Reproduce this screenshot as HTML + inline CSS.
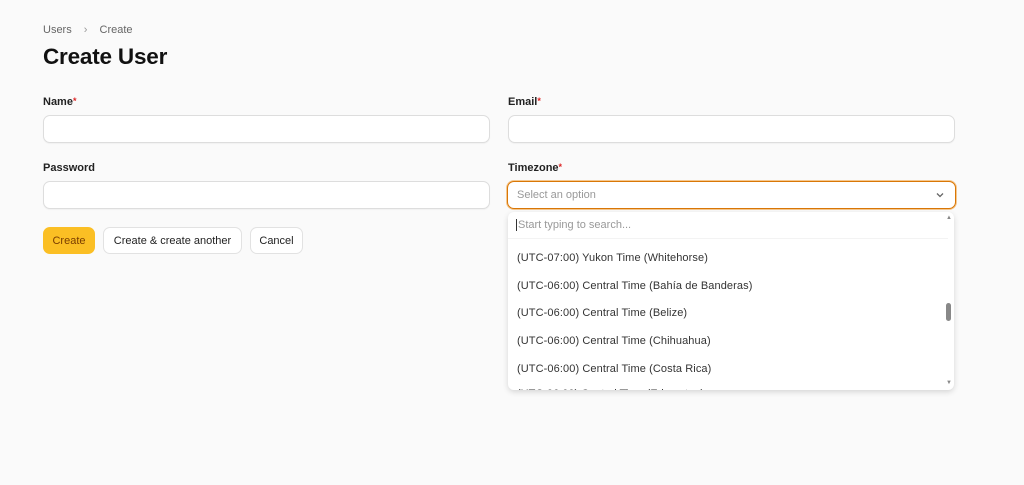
<!DOCTYPE html>
<html><head><style>
*{box-sizing:border-box;margin:0;padding:0}
body{width:1024px;height:485px;background:#fafafa;font-family:"Liberation Sans",sans-serif;position:relative;overflow:hidden;color:#111}
.a{position:absolute}
.lbl{font-size:11px;font-weight:bold;color:#222}
.lbl span{color:#dc2626;font-size:9px;vertical-align:top}
.inp{background:#fff;border:1px solid #ddd;border-radius:7px;height:28px;box-shadow:0 1px 1px rgba(0,0,0,.04)}
.btn{border-radius:7px;height:27px;font-size:11px;display:flex;align-items:center;justify-content:center;border:1px solid #e2e2e2;background:#fff;color:#222}
.opt{font-size:11px;color:#333;left:517px;letter-spacing:.1px}
</style></head><body>
<div class="a" style="left:43px;top:24px;font-size:11px;color:#666">Users <span style="margin:0 9px;color:#999">›</span> Create</div>
<div class="a" style="left:43px;top:44px;font-size:22.5px;font-weight:bold;letter-spacing:-.2px">Create User</div>
<div class="a lbl" style="left:43px;top:96px">Name<span>*</span></div>
<div class="a inp" style="left:43px;top:115px;width:447px"></div>
<div class="a lbl" style="left:508px;top:96px">Email<span>*</span></div>
<div class="a inp" style="left:508px;top:115px;width:447px"></div>
<div class="a lbl" style="left:43px;top:162px">Password</div>
<div class="a inp" style="left:43px;top:181px;width:447px"></div>
<div class="a lbl" style="left:508px;top:162px">Timezone<span>*</span></div>
<div class="a inp" style="left:507px;top:181px;width:449px;border:1.5px solid #d97706;box-shadow:0 0 0 1px #f5c890"></div>
<div class="a" style="left:517px;top:189px;font-size:11px;color:#999">Select an option</div>
<svg class="a" style="left:935px;top:191px" width="10" height="8" viewBox="0 0 10 8"><path d="M2 2.5l3 3 3-3" stroke="#666" stroke-width="1.3" fill="none"/></svg>
<div class="a btn" style="left:43px;top:227px;width:52px;background:#fbbf24;border-color:#fbbf24;color:#7a3d00">Create</div>
<div class="a btn" style="left:103px;top:227px;width:139px">Create &amp; create another</div>
<div class="a btn" style="left:250px;top:227px;width:53px">Cancel</div>
<div class="a" style="left:508px;top:212px;width:446px;height:178px;background:#fff;border-radius:6px;box-shadow:0 2px 6px rgba(0,0,0,.15);overflow:hidden">
<div class="a" style="left:9px;top:176px;font-size:11px;color:#333">(UTC-06:00) Central Time (Edmonton)</div>
</div>
<div class="a" style="left:516px;top:219px;font-size:11px;color:#999;border-left:1px solid #333;padding-left:1px">Start typing to search...</div>
<div class="a" style="left:508px;top:238px;width:440px;border-top:1px solid #f3f3f3"></div>
<div class="a opt" style="top:252px">(UTC-07:00) Yukon Time (Whitehorse)</div>
<div class="a opt" style="top:280px">(UTC-06:00) Central Time (Bahía de Banderas)</div>
<div class="a opt" style="top:307px">(UTC-06:00) Central Time (Belize)</div>
<div class="a opt" style="top:335px">(UTC-06:00) Central Time (Chihuahua)</div>
<div class="a opt" style="top:363px">(UTC-06:00) Central Time (Costa Rica)</div>
<div class="a" style="left:946px;top:303px;width:5px;height:18px;background:#888;border-radius:3px"></div>
<div class="a" style="left:946px;top:215px;font-size:6px;color:#888">▲</div>
<div class="a" style="left:946px;top:380px;font-size:6px;color:#888">▼</div>
</body></html>
